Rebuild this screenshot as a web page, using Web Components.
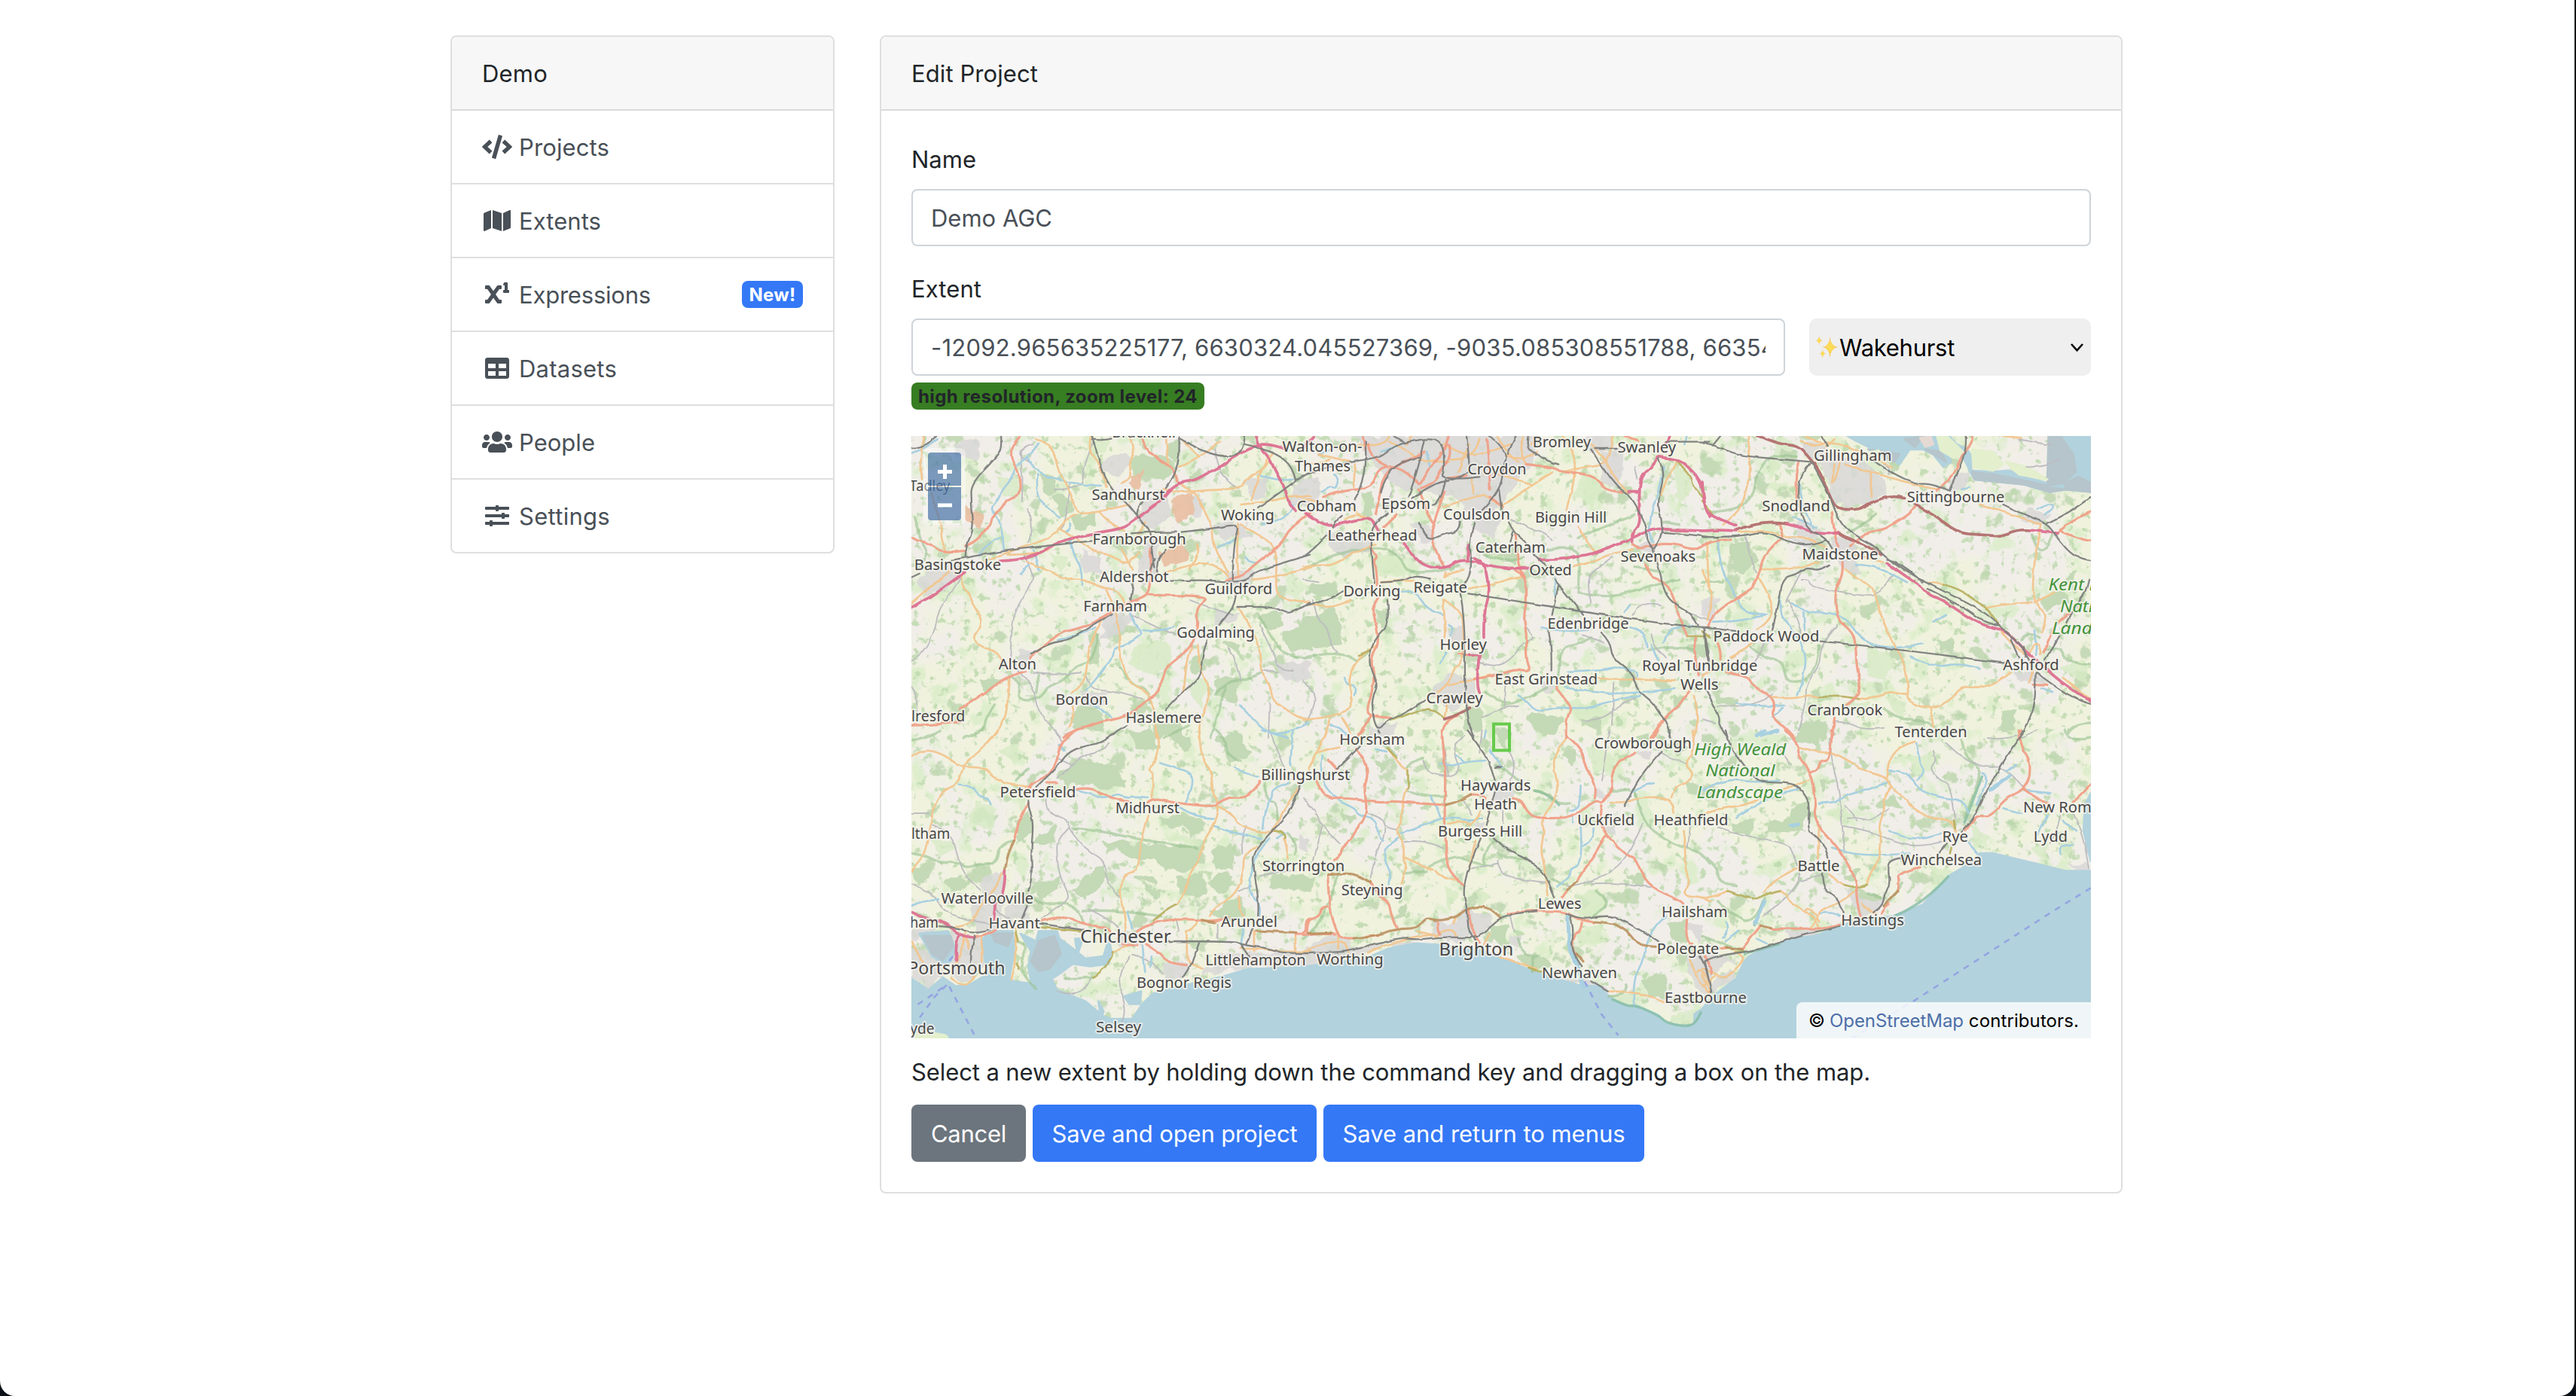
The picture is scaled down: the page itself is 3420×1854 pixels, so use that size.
<!DOCTYPE html>
<html lang="en">
<head>
<meta charset="utf-8">
<title>Edit Project</title>
<style>
html,body{margin:0;height:100%;background:#0b1116}
body{font:400 31px/48px Inter,"Liberation Sans",sans-serif;color:#212529;overflow:hidden}
</style>
</head>
<body>
<app-shell>
  <ui-card slot="nav">
    <fit-text slot="header" w="87">Demo</fit-text>
    <nav-item icon="code"><fit-text w="120">Projects</fit-text></nav-item>
    <nav-item icon="map"><fit-text w="109">Extents</fit-text></nav-item>
    <nav-item icon="sup"><fit-text w="175">Expressions</fit-text><ui-badge slot="end"><fit-text w="62">New!</fit-text></ui-badge></nav-item>
    <nav-item icon="table"><fit-text w="130">Datasets</fit-text></nav-item>
    <nav-item icon="users"><fit-text w="101">People</fit-text></nav-item>
    <nav-item icon="sliders"><fit-text w="121">Settings</fit-text></nav-item>
  </ui-card>
  <ui-card slot="main">
    <fit-text slot="header" w="168">Edit Project</fit-text>
    <project-form></project-form>
  </ui-card>
</app-shell>
<script>
const define = (name, html, ready) => customElements.define(name, class extends HTMLElement {
  constructor() {
    super();
    this.attachShadow({mode: 'open'}).innerHTML = html;
  }
  connectedCallback() { if (ready) ready(this, this.shadowRoot); }
});

define('app-shell', `<style>
:host{display:block;box-sizing:border-box;width:3418px;height:1854px;padding:47px 2px 0 0;background:#fff;border-radius:0 0 20px 20px}
.row{display:flex;align-items:flex-start;gap:60px;width:2220px;margin:0 auto}
.nav{width:510px}.main{width:1650px}
</style><div class="row"><div class="nav"><slot name="nav"></slot></div><div class="main"><slot name="main"></slot></div></div>`);

define('ui-card', `<style>
:host{display:block;border:2px solid #dfdfdf;border-radius:8px;background:#fff;overflow:hidden}
header{padding:24px 40px;height:48px;background:#f7f7f7;border-bottom:2px solid #dadada;border-radius:6px 6px 0 0}
</style><header><slot name="header"></slot></header><slot></slot>`);

const ICONS = {
code:[640,'M278.9 511.5l-61-17.7c-6.4-1.8-10-8.5-8.2-14.9L346.2 8.7c1.8-6.4 8.5-10 14.9-8.2l61 17.7c6.4 1.8 10 8.5 8.2 14.9L293.8 503.3c-1.9 6.4-8.5 10.1-14.9 8.2zm-114-112.2l43.5-46.4c4.6-4.9 4.3-12.7-.8-17.2L117 256l90.6-79.7c5.1-4.5 5.5-12.3.8-17.2l-43.5-46.4c-4.5-4.8-12.1-5.1-17-.5L3.8 247.2c-5.1 4.7-5.1 12.8 0 17.5l144.1 135.1c4.9 4.6 12.5 4.4 17-.5zm327.2.6l144.1-135.1c5.1-4.7 5.1-12.8 0-17.5L492.1 112.1c-4.8-4.5-12.4-4.3-17 .5L431.6 159c-4.6 4.9-4.3 12.7.8 17.2L523 256l-90.6 79.7c-5.1 4.5-5.5 12.3-.8 17.2l43.5 46.4c4.5 4.9 12.1 5.1 17 .6z'],
map:[576,'M0 117.66v346.32c0 11.32 11.43 19.06 21.94 14.86L160 416V32L20.12 87.95A32.006 32.006 0 0 0 0 117.66zM192 416l192 64V96L192 32v384zM554.06 33.16L416 96v384l139.88-55.95A31.996 31.996 0 0 0 576 394.34V48.02c0-11.32-11.43-19.06-21.94-14.86z'],
sup:[512,'M496 160h-16V16a16 16 0 0 0-16-16h-48a16 16 0 0 0-14.29 8.83l-16 32A16 16 0 0 0 400 64h16v96h-16a16 16 0 0 0-16 16v32a16 16 0 0 0 16 16h96a16 16 0 0 0 16-16v-32a16 16 0 0 0-16-16zM336 64h-67a16 16 0 0 0-13.14 6.87l-79.9 115-79.9-115A16 16 0 0 0 83 64H16A16 16 0 0 0 0 80v48a16 16 0 0 0 16 16h33.48l77.81 112-77.81 112H16a16 16 0 0 0-16 16v48a16 16 0 0 0 16 16h67a16 16 0 0 0 13.14-6.87l79.9-115 79.9 115A16 16 0 0 0 269 448h67a16 16 0 0 0 16-16v-48a16 16 0 0 0-16-16h-33.48l-77.81-112 77.81-112H336a16 16 0 0 0 16-16V80a16 16 0 0 0-16-16z'],
table:[512,'M464 32H48C21.49 32 0 53.49 0 80v352c0 26.51 21.49 48 48 48h416c26.51 0 48-21.49 48-48V80c0-26.51-21.49-48-48-48zM224 416H64v-96h160v96zm0-160H64v-96h160v96zm224 160H288v-96h160v96zm0-160H288v-96h160v96z'],
users:[640,'M96 224c35.3 0 64-28.7 64-64s-28.7-64-64-64-64 28.7-64 64 28.7 64 64 64zm448 0c35.3 0 64-28.7 64-64s-28.7-64-64-64-64 28.7-64 64 28.7 64 64 64zm32 32h-64c-17.6 0-33.5 7.1-45.1 18.6 40.3 22.1 68.9 62 75.1 109.4h66c17.7 0 32-14.3 32-32v-32c0-35.3-28.7-64-64-64zm-256 0c61.9 0 112-50.1 112-112S381.9 32 320 32 208 82.1 208 144s50.1 112 112 112zm76.8 32h-8.3c-20.8 10-43.9 16-68.5 16s-47.6-6-68.5-16h-8.3C179.6 288 128 339.6 128 403.2V432c0 26.5 21.5 48 48 48h288c26.5 0 48-21.5 48-48v-28.8c0-63.6-51.6-115.2-115.2-115.2zm-223.7-13.4C161.5 263.1 145.6 256 128 256H64c-35.3 0-64 28.7-64 64v32c0 17.7 14.3 32 32 32h65.9c6.3-47.4 34.9-87.3 75.2-109.4z'],
sliders:[512,'M496 384H160v-16c0-8.8-7.2-16-16-16h-32c-8.8 0-16 7.2-16 16v16H16c-8.8 0-16 7.2-16 16v32c0 8.8 7.2 16 16 16h80v16c0 8.8 7.2 16 16 16h32c8.8 0 16-7.2 16-16v-16h336c8.8 0 16-7.2 16-16v-32c0-8.8-7.2-16-16-16zm0-160h-80v-16c0-8.8-7.2-16-16-16h-32c-8.8 0-16 7.2-16 16v16H16c-8.8 0-16 7.2-16 16v32c0 8.8 7.2 16 16 16h336v16c0 8.8 7.2 16 16 16h32c8.8 0 16-7.2 16-16v-16h80c8.8 0 16-7.2 16-16v-32c0-8.8-7.2-16-16-16zm0-160H288V48c0-8.8-7.2-16-16-16h-32c-8.8 0-16 7.2-16 16v16H16C7.2 64 0 71.2 0 80v32c0 8.8 7.2 16 16 16h208v16c0 8.8 7.2 16 16 16h32c8.8 0 16-7.2 16-16v-16h208c8.8 0 16-7.2 16-16V80c0-8.8-7.2-16-16-16z']};

define('nav-item', `<style>
:host{display:flex;align-items:center;height:96px;padding:0 40px;color:#495057;border-bottom:2px solid #dfdfdf}
:host(:last-of-type){border-bottom:0}
.i{display:flex;justify-content:center;width:40px;margin-right:9px}
svg{display:block;height:32px;fill:currentColor}
.end{margin-left:auto}
</style><span class="i"></span><slot></slot><span class="end"><slot name="end"></slot></span>`, (el, root) => {
  const [w, d] = ICONS[el.getAttribute('icon')];
  root.querySelector('.i').innerHTML = `<svg viewBox="0 0 ${w} 512" width="${w / 16}"><path d="${d}"/></svg>`;
});

define('ui-badge', `<style>
:host{display:flex;align-items:center;justify-content:center;box-sizing:border-box;width:81px;height:36px;border-radius:8px;background:#3478f6;color:#fff;font-size:24px;font-weight:700;line-height:36px}
:host([kind=ok]){width:389px;background:#377d22;color:#212529}
</style><slot></slot>`);

define('ui-button', `<style>
:host{display:flex;align-items:center;justify-content:center;height:76px;border-radius:8px;background:#3478f6;color:#fff}
:host([kind=secondary]){background:#6c757d}
</style><slot></slot>`);

define('ui-field', `<style>
:host{display:flex;align-items:center;box-sizing:border-box;height:76px;border:2px solid #ced4da;border-radius:8px;padding:0 24px;color:#495057;background:#fff}
div{flex:1;overflow:hidden;white-space:nowrap;width:0}
</style><div><slot></slot></div>`);

define('ui-select', `<style>
:host{display:flex;align-items:center;box-sizing:border-box;height:76px;border-radius:10px;padding:0 10px 0 8px;color:#000;background:#efefef}
.c{margin-left:auto}svg{display:block}.s{margin-right:1px}
</style><svg class="s" width="31" height="30" viewBox="0 0 31 30"><defs><radialGradient id="g"><stop offset="0" stop-color="#ffe14d"/><stop offset=".6" stop-color="#f8d266"/><stop offset="1" stop-color="#eec08a"/></radialGradient></defs><g fill="url(#g)"><path d="M19.500 1Q20.500 13.500 30.500 15Q20.500 16.500 19.500 29Q18.500 16.500 9.500 15Q18.500 13.500 19.500 1Z"/><path d="M5.200 0Q5.700 5.500 9.800 6.200Q5.700 7 5.200 12.500Q4.700 7 .8 6.200Q4.700 5.500 5.200 0Z"/><path d="M9.800 17.500Q10.300 22.800 14.200 23.600Q10.300 24.400 9.800 30Q9.300 24.400 5.600 23.600Q9.300 22.800 9.800 17.500Z"/></g></svg><slot></slot><svg class="c" width="17" height="11" viewBox="0 0 17 11"><path d="M1 1l7.500 8.300L16 1" fill="none" stroke="#000" stroke-width="2.600"/></svg>`);

/* Map geometry: six survey sheets, each with its own origin. 
   One sheet unit is 1/2.9037 px across and 1/3 px down. */
const SHEETS = [
{o:[1200,570],
urban:'930,290 1010,250 1020,340 960,400 900,350;690,490 760,520 760,570 700,580;80,560 230,520 225,600 90,655 60,620;800,100 880,110 820,190 760,150;1490,240 1568,200 1568,310 1500,300;1240,580 1340,560 1330,630 1250,620;790,740 880,750 850,800 760,840;440,880 490,890 480,940 430,940;1320,200 1400,190 1390,270 1320,260;1200,380 1310,380 1340,430 1220,430;1090,270 1150,280 1140,340 1100,340;940,430 980,440 970,600 930,620 900,560;190,60 280,50 290,110 200,100;680,1040 780,1060 750,1110 680,1090;1210,720 1290,740 1270,770 1200,770;1430,940 1568,930 1568,990 1480,1000',
wood:'895,105 1010,115 1050,160 1010,205 940,180 890,170 880,120;530,190 580,190 585,250 540,250;570,265 620,265 655,330 600,335;660,345 730,340 730,390 660,395;1460,810 1568,780 1568,880 1490,880;660,1120 750,1130 760,1190 650,1180;295,1005 370,1000 320,1055;1030,50 1060,50 1050,120 1025,110;1370,740 1440,730 1460,780 1390,790;970,1180 1060,1160 1080,1230 960,1230;1200,1000 1290,990 1280,1080 1210,1060;720,820 750,820 745,930 715,930;1110,900 1150,890 1160,960 1120,970;1240,860 1280,850 1290,900',
grass:'360,200 440,200 440,260 380,260;900,870 1000,850 1040,900 960,980 870,930;560,500 630,510 610,570;700,30 790,60 740,110;1080,1000 1170,1000 1150,1100',
mil:'1035,280 1100,255 1115,330 1065,375 1040,340;990,490 1080,470 1095,520 1000,550;240,310 300,340 295,395 255,370;885,180 918,165 900,230 876,215',
green:'40,350 65,450 100,510 50,560;230,1230 310,1210 320,1140 350,1100;420,990 450,1010 440,1080 520,1080 560,1020 620,1000 650,950 740,920 745,820;830,950 880,1020 950,1040 950,1090;1370,740 1400,800 1430,850 1480,910 1568,910;1200,1060 1240,1000 1330,1000 1380,970;1180,1230 1210,1150 1240,1020;520,980 510,1050;80,30 70,60;1000,1230 1100,1180',
minor:'29,925 80,890 120,800 130,730 190,640 220,590;410,920 415,780 440,700 500,600 500,570 460,500;440,960 500,1020 510,1110 560,1170 600,1225;500,970 580,985 680,970;580,240 690,240 690,150 730,50;450,90 450,130 460,200 455,290;640,220 630,380 600,400;29,1025 55,1060 50,1130;700,980 720,1040 800,1040 920,1075;1250,870 1290,950 1300,1000;1405,1230 1410,1090;880,740 950,780 1050,820;500,60 450,80 440,110 480,130;1440,970 1380,960;1370,780 1430,900 1440,960 1500,960;1200,80 1210,190 1290,235;1100,680 1200,720 1270,740;480,320 500,400 480,450',
river:'520,60 500,90 470,110 430,150 415,200 380,240 360,290 330,320 380,370 385,480;380,430 340,440 290,500;470,110 520,180 600,200 640,220 760,225;515,180 510,260 540,300 600,350;640,375 648,400 620,410;640,430 650,490 690,560 685,620;480,540 450,580;500,480 520,560;870,730 900,790 920,820 850,860 810,870 800,920 770,950 740,1000 700,1040;920,800 960,810 1040,790;590,840 670,825 740,790;700,1080 760,1110 800,1150;1295,1100 1350,1160 1400,1210 1480,1215 1560,1170;29,95 80,80 130,40;1320,510 1340,540 1370,530;1380,380 1480,370 1500,300;1210,470 1280,440;1370,180 1440,210 1500,200',
orange:'29,695 90,640 150,590 200,550;220,580 225,630 250,650 260,690 300,750 295,795 265,825 285,860 340,880 370,900 375,925;405,985 400,1100 385,1170 340,1230;510,40 545,50 580,90 595,170 640,240 665,340 750,330 870,300;665,340 630,350 570,430 480,465 400,490 300,530;470,525 570,570 620,597 705,600 750,630 830,640 850,690;600,400 660,430 730,490 800,500 870,550 905,490;750,330 800,380 850,405;780,640 810,700 830,790 835,930 870,1010 930,1040 960,1080 975,1230;770,750 715,850 705,960 690,1020 650,1050;650,1100 660,1130 635,1185;1110,870 1085,930 1080,1050;1130,860 1140,970 1180,1020 1165,1120 1135,1170 1140,1230;1290,710 1350,810 1375,880 1378,970 1415,1030 1420,1080 1480,1120 1530,1155 1568,1155;870,30 890,80 865,150 880,200 840,215;1010,27 1020,150;1080,250 1130,245 1300,238 1330,190 1400,155 1420,100;1060,215 1130,255 1160,330 1190,390 1195,480 1250,570;1080,250 1000,240;1300,300 1400,290 1500,265 1568,270;1010,570 1100,540 1200,530 1250,585;1290,380 1280,480 1290,590;1300,380 1400,440 1440,480 1430,660 1480,680 1568,690;1130,460 1140,510 1100,555;720,27 710,90 760,140 780,230;75,27 60,120 70,200;105,250 125,320 150,400 140,430 165,490;1060,150 1150,110 1220,50;1080,50 1140,110;1340,280 1370,180 1400,120;1340,600 1440,590 1568,550;840,480 880,560;930,370 900,430;400,500 500,500 560,480',
salmon:'445,27 415,80 413,120 438,160 450,200 450,260 395,280 380,315 340,350 335,385 300,405 290,440 240,465;29,430 50,445 90,450 145,495 235,485;920,40 930,75 980,120 1045,160 1060,215;950,475 955,560 948,620 940,660 870,688 780,738 730,775 650,800 600,812 560,850 500,890 490,915;940,660 980,662 1180,663 1135,705 1128,740 1138,775 1110,870 1015,940 1010,970 990,1000 985,1050 930,1085 895,1120 840,1150 760,1165 700,1190 650,1198 615,1230;470,965 400,985 360,1015 300,1060 215,1115;29,1180 130,1178 220,1165;1568,330 1490,395 1470,430 1440,475 1380,515 1330,560 1300,590 1240,600',
rail:'375,27 378,80 345,125 260,215 260,290 270,400 240,460 237,510;185,522 350,490 500,470 725,445;725,27 750,120 790,230 860,295 910,360 950,410 955,480 965,550;725,40 760,47 800,38;1060,27 1065,90 1045,190 1010,235;1060,35 1120,70 1200,105 1280,110 1310,75 1315,27;1315,60 1370,75 1440,100 1500,150 1510,205;1568,170 1510,205 1440,260 1365,315;1070,410 1200,395 1295,375 1270,460 1268,600;880,415 960,408 1050,410;1030,605 1150,600 1240,608 1320,605 1350,570 1440,540 1568,500;1010,480 965,530 980,570;965,520 950,560;885,610 875,680;800,738 720,785 640,840 560,850 490,895;1280,660 1275,700 1240,750 1215,780;1285,708 1420,705 1470,732 1500,730 1568,690;1170,840 1150,900 1145,980 1100,1030 1040,1080 1010,1120;860,1180 820,1200 790,1230;29,75 60,75 120,40 125,27;29,590 60,575;920,290 895,320 900,350',
pink:'29,712 60,690 105,668 160,625 235,570;370,525 435,522 500,500 545,485 590,450 725,415 840,398 900,355 985,290 1020,245 1060,212 1120,205 1170,175 1230,145 1260,118 1320,85 1370,58 1430,65 1470,78;1358,27 1370,70 1410,115 1430,165 1470,235 1480,290 1510,325;1550,335 1568,345',
t:'Bracknell,805,1045,34;Tadley,25,175,246;Sandhurst,727,1003,281;Woking,1225,1425,362;Farnborough,730,1085,460;Basingstoke,43,372,562;Aldershot,758,1018,608;Guildford,1163,1418,656;Farnham,695,935,726;Godalming,1055,1350,830;Alton,368,508,958;Bordon,587,785,1098;Haslemere,858,1145,1170;lresford,32,233,1164'},
{o:[1730,570],
urban:'200,27 560,27 900,27 880,130 800,240 740,330 620,320 560,260 480,240 400,250 330,200 260,120;1150,90 1230,90 1215,240 1160,200;490,1060 560,980 660,1000 660,1080 560,1110;0,200 60,200 70,260 20,300 0,280;565,800 615,800 615,850 570,850;290,1180 355,1165 340,1225 300,1225;420,380 480,380 500,440 450,450;1100,30 1180,27 1190,70 1110,90;920,1010 970,1020 950,1050;90,420 260,440 250,480 130,490;680,340 760,360 740,430 660,400;1280,470 1350,460 1340,500',
wood:'0,760 120,720 150,850 60,870 0,850;620,1130 680,1110 690,1190 640,1200;870,1140 1000,1150 960,1210 890,1190;1060,1150 1150,1150 1140,1200;230,260 270,260 260,340 230,330;280,720 320,730 310,790;1480,870 1568,860 1540,920;400,800 430,790 420,830;30,620 130,620 120,660 20,660;780,470 820,480 815,540 780,520;1430,1060 1480,1080 1440,1110',
grass:'1080,180 1150,230 1110,300 1050,250;1000,1080 1200,1130 1150,1200 1050,1150;1440,130 1500,230 1440,320;700,1090 780,1150 720,1230;280,500 390,520 380,580 300,570',
green:'0,560 90,510 200,480 320,470 380,520 400,570 540,570 600,540;940,480 1060,460 1065,560 1060,650;1060,430 1140,400 1280,340;980,1020 990,870 1060,860 1110,830;0,910 100,890 190,905 210,930 260,880;780,1100 850,1080 940,1030;1060,650 1170,670 1290,640 1380,610 1450,600;1390,370 1450,380;700,500 790,540 850,510;1330,880 1440,860 1500,880;700,1050 740,1080 790,1090;1280,550 1390,570',
minor:'40,680 50,750 90,780 105,850 130,890;0,1000 45,1050 45,1110 10,1170;860,790 900,830 850,850 800,920 740,950 680,930;1110,690 1090,600 1140,550 1190,510;800,360 850,380 880,400 940,410 960,440;1160,850 1080,820;780,1100 770,1050 790,970;690,1150 750,1110 830,1100;1380,700 1300,680 1270,740;340,250 320,330;1340,820 1345,870 1400,910;1190,1180 1200,1010;1568,760 1480,730;0,600 60,610;1280,150 1290,200;1080,1160 1150,1160 1230,1090 1280,1070',
river:'70,250 100,220 130,240 135,200 120,180;380,650 410,640 450,670 480,720 540,740;560,780 580,780 570,820;530,930 550,890;1390,150 1370,250 1345,320 1330,430 1350,450;970,590 970,660;1020,965 1150,960 1210,945 1300,965 1290,990;1010,1030 1130,1050 1250,1055 1430,1035;830,1060 860,1080 900,1130 980,1105 1080,1120 1190,1080 1300,1060;920,790 1000,810 1100,800;1260,790 1320,800 1325,870;1390,850 1410,800 1440,790 1500,780;1340,860 1370,920;160,990 170,1020 210,1020 200,1060;110,80 60,100;300,90 380,60;480,90 490,160;1470,60 1480,27;105,1180 160,1190 170,1225;1240,730 1260,700',
orange:'0,550 60,540 110,545 180,500 250,465 280,460;0,685 50,705 130,710 180,680;300,610 400,600 430,605;640,635 740,615 820,590 850,590;540,680 550,800 545,830;545,680 610,720 620,800 615,940 575,950 565,1020 500,1060;560,1020 620,1010 720,980;285,860 215,900 175,1000 195,1080 150,1145 0,1158;150,1150 185,1210;105,1155 80,1230;1130,990 1200,1000 1240,995 1300,1000 1430,1000;540,310 640,275 700,260 740,290 770,310 880,220 960,170;880,220 800,190 750,180;650,200 660,260;560,120 660,130 680,40;1000,27 1050,100 1045,210 1030,260 1015,320;1090,150 1190,155 1195,27;780,100 850,130 900,90;330,50 400,80 450,130 560,130;540,60 630,110 720,90 800,60;750,27 770,80 830,130;1440,130 1400,200 1380,260;1060,390 1100,470 1130,490;1040,545 1110,530 1200,490 1270,480;160,360 210,330 240,350;180,310 230,350;0,280 70,290;550,570 540,600 560,570 620,560;1510,1060 1530,1180 1505,1230;200,140 195,230;330,27 310,80 200,60;60,100 180,130;640,60 600,170;850,27 830,90 860,140;1090,150 1000,170;1110,60 1160,110 1200,200 1250,250;880,60 910,27;1540,560 1568,640;560,1060 545,1150;0,130 50,150 100,120;420,27 400,60',
olive:'1445,130 1500,190 1500,225 1540,270;545,1155 520,1125 470,1115 420,1130 340,1160;260,880 215,900;1480,825 1568,825',
salmon:'75,270 150,245 265,235 290,150 370,150 440,210 450,225 490,150 540,100 560,30;470,90 370,140 310,180 290,290 280,340;560,60 570,100 530,170 500,220 455,235;710,40 720,130 720,240;860,140 960,150 1000,172 1080,175 1150,205 1160,245 1230,250;560,195 630,185;250,60 260,120 320,145;545,250 500,380 495,430 520,510 545,550;445,240 480,340 500,370;360,340 310,390;260,470 290,510 270,520 285,560 285,620;290,670 265,710 275,750 295,850 260,910 275,980 265,1050 245,1120 260,1145 340,1150;260,1145 215,1220;820,420 825,540 860,600 862,690 850,740 862,820 860,920 880,965 820,955 740,985 660,995;975,1030 1020,1090 1035,1110 1010,1170 1015,1230;1320,540 1340,590 1395,605 1430,670 1450,760 1480,820;1270,460 1290,480 1350,460 1430,455 1530,490 1568,450;1495,1040 1450,1100 1390,1150 1340,1230;1515,830 1500,870 1525,980;535,1230 535,1160 600,1140;230,27 240,80;1240,27 1290,45;600,895 640,900;820,560 850,590;720,270 770,310',
rail:'0,185 60,160 190,130 300,110 350,65 470,35 540,50 545,170 530,190 600,200 680,190;470,40 440,180 405,270;240,50 245,130 225,240 200,280;450,110 380,130 320,180 300,250;420,275 500,215 600,200 640,165;630,27 640,110 640,150;720,27 790,95 770,150 765,240 690,320;790,95 820,27;350,27 390,50;755,240 765,320;660,375 640,440 650,530 640,600 605,640;795,370 820,420 855,440 885,500 940,545;810,410 800,450;450,375 470,450 550,415 600,410 605,370;500,305 530,300 550,200;0,510 40,480 90,425;150,345 120,370 115,390;330,335 270,370 260,460 275,610;300,610 380,608 430,580 490,595;0,705 110,680 155,645;325,680 335,770 275,840 255,900 260,960 290,1020 265,1070 270,1150 290,1200 320,1165 370,1145 470,1080;640,655 960,708 1190,745 1480,787 1568,790;605,650 625,750 623,1160 660,1230;985,620 960,740;970,600 1040,690 1080,740;945,800 960,860 957,965;1150,810 1185,850 1190,910 1270,970 1290,1040 1350,1090 1365,1120 1410,1180 1415,1230;1110,80 1160,160 1220,240 1260,260 1325,380 1325,450 1350,475;1125,75 1210,75;1370,115 1395,180 1365,290 1385,370 1380,440 1350,480;1400,50 1568,50;1380,410 1480,418 1568,430;1350,480 1375,560 1390,640 1420,690 1500,735 1520,780;885,90 860,75 870,30;885,90 940,130 985,140;1545,790 1555,850 1568,920',
pink:'10,335 60,370 110,388 160,372 240,355 270,362 290,405;390,455 430,515 485,552 555,553 600,520 660,528 740,548 800,555 880,553;910,520 1000,520 1050,505 1110,500 1200,460 1270,437 1330,405 1380,395 1430,403 1568,405;640,460 635,520;660,515 700,535 715,600 718,660 695,740 697,830;680,900 665,1010 680,1050;640,898 680,900;1415,27 1400,60;1365,115 1345,150 1300,190 1295,290 1300,380 1270,410 1268,450;1365,110 1450,118 1500,165 1540,220 1548,320 1568,345;1255,248 1295,248;0,75 40,30',
burnt:'545,1155 600,1140 640,1110',
t:'Walton-on-,-77,225,90;Thames,-29,180,168;Cobham,-21,203,326;Epsom,305,488,318;Croydon,637,858,181;Bromley,888,1107,71;Swanley,1215,1435,94;Coulsdon,543,795,361;Biggin Hill,897,1168,373;Leatherhead,97,437,445;Caterham,667,932,493;Oxted,875,1033,583;Sevenoaks,1227,1510,529;Reigate,428,630,651;Dorking,158,373,667;Edenbridge,945,1253,795;Horley,530,705,878;Crawley,478,690,1093;East Grinstead,742,1133,1016;Royal Tunbridge,1310,1749,962;Wells,1458,1599,1037'},
{o:[2260,570],
urban:'440,90 620,130 700,190 710,250 650,290 560,300 510,290 480,200;960,190 1030,170 1010,250 950,240;500,440 570,440 610,580 540,560;1200,970 1290,970 1320,1010 1230,1000;400,60 480,60 460,120 400,110;0,690 60,680 40,740 0,740;370,370 450,400 430,430 370,420;1270,320 1330,340 1310,370 1250,360;340,430 440,440 420,470',
wood:'110,460 190,450 200,520 160,565 115,550;1310,680 1400,650 1405,690 1320,720;920,840 960,840 960,890 920,880;1160,1130 1210,1130 1210,1200 1160,1200;380,1180 460,1160 480,1230 370,1230;300,90 370,90 340,150;1400,600 1440,560 1430,640;780,1170 840,1150 860,1190;60,1060 130,1070 120,1100 70,1090;200,200 260,210 240,260',
grass:'20,860 80,900 60,1000;640,870 740,920 700,1000 640,980;1380,950 1470,920 1480,1020;700,1080 790,1090 770,1140;540,1080 640,1090 600,1140;290,40 360,60 260,180',
green:'40,330 140,320 200,260 210,170 270,90 360,110;560,415 640,370 670,340;180,860 230,910 310,920 320,1000 370,1010 440,970 450,860;700,1110 740,1150 860,1160 900,1190;1230,840 1250,800 1300,830;1270,420 1290,480 1330,480 1350,420;1320,880 1380,860 1400,930 1498,940;60,430 60,480;1410,1210 1430,1170 1498,1170;0,610 80,610',
minor:'165,430 190,530 210,570;380,600 410,600 420,630 650,670 680,650 740,580;330,680 370,750 390,850;520,780 460,850 450,950 400,1010 400,1090 370,1200;0,1155 50,1170;60,1105 200,1110 270,1060;510,1165 570,1170 620,1200 700,1190;240,850 230,890 180,960;1220,40 1370,70 1340,60;1250,150 1330,155 1370,120;700,140 730,150 720,180;380,570 320,690;1230,1230 1290,1200',
river:'60,450 70,560 130,660 150,720 220,740 250,735;375,210 385,330 430,390;590,540 640,540 720,570 790,610;300,660 300,740 330,770 380,850 410,940 365,1060;340,690 390,730 500,730 560,760 620,850 750,880 850,855;390,730 395,800;800,905 890,950 1000,930 1070,955;890,770 940,740;130,1090 240,1110 320,1100;40,770 180,765 250,735;350,350 440,390;1290,320 1350,290 1360,310 1320,340;1280,800 1290,900;1310,1030 1350,1050;1000,240 1030,230;270,1150 310,1110',
sea:'1335,27 1498,27 1498,250 1400,240 1340,250 1240,220 1050,200 1030,165 1120,170 1180,165 1240,190 1330,215 1390,180 1430,160 1425,110 1380,60;560,27 900,27 940,90 960,130 930,150 890,100 850,80 800,80 760,140 720,110 660,80 600,50;950,27 980,60 1020,80 1040,110 1035,170 1010,120 960,60',
mud:'1335,27 1380,27 1430,100 1440,170 1390,215 1330,225 1240,205 1120,180 1040,170 1050,200 1240,220 1340,250 1400,240 1330,232;1400,215 1450,190 1498,215 1498,250 1400,240;640,80 760,100 740,130;860,80 920,90 940,130;780,40 850,30 820,70',
sandbar:'840,35 880,30 890,60 860,70',
isle:'905,27 945,30 1010,95 970,115 920,85;1040,80 1120,90 1160,140 1120,165 1045,150;1170,130 1250,150 1330,200 1220,180;610,100 680,85 690,110',
orange:'180,27 175,90 190,150 160,280 140,330 80,380;380,50 440,70 490,50 600,80 730,150;510,40 480,70;510,140 500,210;530,130 520,200 500,210;650,170 650,270;550,140 700,185 850,230 910,240;1070,300 1200,340 1300,380;1305,380 1285,480 1270,660 1300,710 1335,755 1310,810;1270,690 1140,698 1100,712;1280,690 1360,650;140,410 260,400 310,430 400,425 480,470;20,450 20,620 45,660 20,760;230,555 330,570 450,530;215,590 270,680 270,760 210,800;550,560 600,600 660,625 680,720 740,870 770,900 795,1020 790,1090 880,1115 960,1080 1000,1020 1110,1035 1190,970;880,1115 890,1185;270,1070 370,1075 410,1055 450,1068;600,1075 690,1065 720,1045 790,1055;1275,960 1260,1010;1260,900 1270,860 1300,850 1305,900;1150,800 1180,850 1250,900;110,910 180,870 220,820;590,500 700,530;0,980 40,960;870,612 930,615;1160,27 1230,35;400,30 470,60;1390,990 1498,1080',
olive:'930,617 1000,640 1060,690 1100,712 1150,790;450,1068 540,1058 600,1075;0,285 40,340;0,805 30,830',
salmon:'500,330 510,430 525,470;570,465 600,440 640,410 700,400 740,375 800,340 825,305;905,245 970,190 1000,100 1050,50 1040,27;1370,415 1400,370 1498,330;1380,405 1470,445 1498,445;540,530 545,570 510,650 520,760 560,790 590,830 595,950 610,1000 600,1070 555,1100;310,430 240,490 215,590 190,635 140,670 90,700 40,740 20,790;60,850 72,880 70,920;300,375 310,430;370,130 360,200 365,300;90,970 170,980 190,1020 270,1070 280,1110 265,1140 330,1200 355,1230;510,1150 500,1230;0,470 30,440 110,440;1315,890 1340,840 1360,770 1420,730;1275,1015 1330,1018;1220,1230 1230,1200;440,150 460,190',
burnt:'215,27 300,60 370,65 410,110 455,170 500,290 525,318 605,322 650,290 735,262 780,275;820,300 900,345 985,415 1080,420 1150,428 1215,398 1265,402;130,402 190,380 290,370 330,378;520,413 570,445 625,455 690,500',
rail:'0,50 50,65 140,105 310,120 420,130;40,65 70,27;1015,27 1020,70 985,180 955,240;420,130 375,180 370,290 400,400 480,430 500,475;420,130 490,260 520,350 570,415 660,460 715,520 830,595 950,655 1100,735 1160,800 1240,870 1260,920;665,130 740,180 830,220 880,215 955,245;460,27 485,70;0,430 130,430 240,405 310,440 410,470 480,440;490,540 450,565 400,550 360,580 310,590 295,700 270,800;455,845 800,880 1165,932;0,790 140,805;10,800 10,870 25,930;1160,300 1240,340 1330,375 1365,430 1440,520 1498,525;1330,375 1400,345 1498,270;715,520 770,535 850,610;1320,920 1370,840 1430,720 1480,650 1490,600;1190,840 1220,910;870,635 1010,710 1090,775 1150,785;1290,970 1410,1070 1498,1095;1285,970 1285,1080 1265,1150 1225,1230;15,1040 70,1145 60,1180 100,1230;1240,870 1245,905',
pink:'0,210 8,320 40,345 130,385;0,405 60,400 130,405;330,378 400,400 450,420 520,413;715,535 790,590 850,630 880,665 920,675 1010,740 1090,785 1170,800 1240,880 1290,920 1350,980 1440,1050 1498,1085;1265,402 1370,415',
t:'Gillingham,433,727,125;Snodland,233,490,328;Sittingbourne,792,1162,291;Maidstone,388,675,519;Paddock Wood,45,448,846;Ashford,1162,1373,960;Cranbrook,408,692,1140;Tenterden,745,1018,1228',
g:'Kent D,1337,1535,642;Natio,1382,1542,729;Lands,1350,1532,815'},
{o:[1200,970],
urban:'310,590 380,560 370,780 280,810 270,720;29,790 110,800 100,830 29,820;190,800 290,830 310,920 240,1010 180,960;1010,930 1090,930 1080,970 1010,1000;1230,900 1320,880 1568,895 1568,935 1300,945 1150,970;820,820 900,810 910,855 840,860;29,870 100,900 160,960 95,1025 29,970;390,700 470,700 470,750 400,760;1520,430 1560,440 1540,480;340,970 420,990 340,985',
wood:'600,180 690,120 830,150 850,230 750,220 600,200;770,440 850,450 1100,470 1160,520 1080,560 960,520 860,500;710,580 770,540 770,610 690,670 660,640;500,620 600,590 590,630 520,670;1060,590 1150,580 1170,640 1080,660;1190,720 1290,660 1320,720 1250,765;530,410 580,380 580,440 510,450;29,560 100,540 100,590 60,610;440,370 480,330 500,400 440,440;880,0 950,0 965,70 900,80;1210,30 1290,10 1340,90 1250,120;1430,570 1568,590 1568,640 1420,620;1190,490 1260,450 1270,560 1200,540;160,600 230,600 240,625 190,635;1000,340 1160,370 1150,400 1020,380;930,620 990,640 980,670;900,590 950,580 960,610;1180,620 1220,570 1260,590 1230,650;1020,20 1100,30 1090,80',
grass:'280,280 350,310 340,400 260,360;370,80 440,70 430,130;100,420 200,460 150,500;430,270 470,260 450,310;1020,430 1140,430 1130,460',
green:'29,490 90,500 140,530 200,520 240,550 300,530 360,530 370,450 420,440;500,670 540,700 620,680 680,720 690,760;690,720 790,710 990,740;650,390 760,400 930,440 1130,470;430,840 480,850 450,920 460,980 510,1030;620,990 730,985;29,40 90,30 140,0;1200,0 1240,30 1240,100 1300,120;1480,410 1520,450 1510,490;430,200 480,150;1390,220 1400,280 1440,290 1440,350',
minor:'110,380 170,400 190,440 210,510 230,580 300,640;29,330 100,330;550,270 550,310 580,340 635,360 635,390 680,450 720,490 775,520 780,610 830,665;635,390 590,440 590,500 600,580 635,650 630,680 570,720 530,750;29,610 100,640 130,690 200,750 330,770;870,900 830,960 840,1060 855,1130 840,1160;590,1040 690,1070 720,990;1320,380 1300,430 1305,490;1410,0 1440,80 1470,150;1370,580 1440,560 1510,560;590,190 650,140 690,100 750,90 790,50;880,890 940,900 1000,970;710,710 790,750 830,790;1290,640 1340,620;350,700 370,740 440,770;1210,770 1210,830;1050,750 1060,800;580,0 610,50;590,110 650,140',
river:'210,215 260,220 290,260 330,275 335,295;665,240 730,255 770,275 830,250 850,270 900,265 940,270;985,130 1050,150 1110,170 1115,230 1085,290;1060,305 1130,350 1195,350;1195,380 1280,415 1380,430;1275,145 1310,175 1370,185;1480,210 1420,230 1420,270 1395,300 1385,390;1410,430 1370,470 1340,560 1330,640 1380,700 1370,740;1500,0 1490,140;29,700 60,680 130,675;860,720 880,790;920,860 930,960;1380,0 1480,30;600,60 620,80;1310,780 1300,850;955,900 950,940;1440,430 1470,410',
sea:'0,960 29,990 60,1010 95,1035 150,985 200,1020 260,1010 300,985 340,975 420,1000 500,1010 520,1035 590,1035 700,1080 770,1140 800,1150 880,1150 920,1090 960,1050 1060,1020 1160,1000 1250,975 1330,950 1568,945 1600,1240 0,1240;60,810 170,800 200,870 180,920 150,930 110,900;305,830 330,800 420,800 425,880 405,1000 330,990 310,900;450,810 510,840 520,800 590,800 600,830 640,860 700,910 770,900 790,830 800,880 790,930 720,940 650,930 600,970 570,990 590,1035 520,1035 490,1000 480,940 490,880;850,1060 915,1040 910,1090 870,1090;750,1080 770,1120 760,1145;660,830 690,830 670,890',
mud:'75,820 180,820 190,860 150,915 110,890;340,810 420,810 400,860 350,840;520,840 580,820 605,890 560,950 520,960 490,920',
isle:'29,1215 80,1200 160,1215 170,1227 29,1227',
orange:'29,105 60,85 100,78 160,100 215,145 315,148 340,185 380,200 385,215 490,225;360,0 300,80 240,120 220,180 200,220 145,240 110,320 90,480 50,530 29,560;975,0 985,60 965,130 945,160 965,170 955,270;940,340 915,420 905,560 850,575 830,640 850,710 855,800;1140,0 1150,120 1185,160 1190,250 1215,300 1205,360 1150,450 1145,510 1100,570 1090,640 1050,695;1215,305 1275,340 1280,370 1390,415 1430,400;1360,460 1310,495 1310,560 1285,650 1190,710 1180,740;1290,660 1295,720 1310,740;1465,430 1480,510;1420,400 1520,230;380,570 340,650 290,700 270,770 200,780;240,800 225,870 200,940;240,820 250,870;300,820 300,920;430,790 435,930 415,990;1090,800 1090,900 1100,930 1150,950;1130,760 1110,800 1090,800;1350,800 1350,880;1300,870 1420,870 1450,885 1568,880;29,840 70,920;180,985 220,1020 265,1000 270,980;860,860 810,880;1510,810 1510,880',
olive:'1050,695 1000,720 960,760;805,880 800,930 730,985;530,785 690,800;1430,400 1475,405 1470,430;430,800 440,840;435,930 445,950',
brown:'425,440 400,480 390,560;1358,798 1510,805;1150,755 1200,765',
salmon:'660,0 600,55 590,130 550,185 490,210 485,230;550,210 590,210;665,235 720,225 790,270 870,285;940,290 960,270 1050,290 1200,305 1215,285 1260,265 1310,270 1350,240 1375,205;480,290 435,370 425,440;530,760 560,748 640,745 680,770 790,785 795,800;900,800 960,760 1100,750 1200,765 1250,745;935,855 980,880 1020,930 1090,935;840,855 900,855;270,825 320,820 355,795;1510,810 1550,815 1550,750 1568,750',
pink:'390,560 390,620 378,655;355,690 350,750;29,725 80,750 170,765 210,820 270,825;210,820 195,870 205,915',
rail:'825,0 780,45 690,62 630,90 590,150 510,225;480,280 480,310 500,360 490,480 495,600 480,640;475,700 455,750;130,780 200,782 275,815 330,795;275,820 260,860 258,925;525,770 690,795;1020,840 1270,840 1310,855 1420,870 1450,888 1568,888;1140,840 1120,900 1105,940 1075,985;1300,855 1330,900;1345,790 1320,850;1530,220 1490,320 1450,370 1410,410 1345,490 1350,560 1370,690 1365,740',
ferry:'175,1020 230,1130 280,1230;165,1015 120,1060 50,1160;150,1025 35,1105;190,900 165,930',
t:'ltham,32,175,432;Petersfield,373,660,266;Midhurst,818,1060,331;Billingshurst,1380,1717,197;Storrington,1385,1696,560;Waterlooville,147,497,691;Havant,330,522,788;ham,27,130,786;Arundel,1225,1437,782;Littlehampton,1165,1547,936;Bognor Regis,900,1260,1026;Selsey,743,912,1202;yde,27,115,1208',
b:'Chichester,683,1027,847;Portsmouth,18,388,971'},
{o:[1730,970],
urban:'580,760 630,720 720,740 740,780 700,800 620,830 550,830;0,900 80,820 180,820 200,870 300,850 250,890 50,935 0,935;750,210 800,220 790,280 740,280;1290,90 1350,85 1340,115 1300,120;1480,900 1568,910 1568,1060 1510,1020;960,980 1100,1000 1180,1040 1080,1015;805,810 840,820 830,860 810,850;500,770 560,770 560,820 500,820;1130,240 1150,240 1150,280;1480,770 1540,790 1520,840;350,840 430,850 440,855 350,860;255,0 320,0 310,15 260,15;1140,370 1200,380 1190,410;660,370 700,370 690,420',
wood:'1310,1000 1390,970 1400,1060 1340,1060;830,910 900,900 960,940 930,960;1410,780 1470,750 1480,840 1420,830;720,790 790,780 760,850;150,340 200,340 180,370;740,0 790,0 785,60;1250,580 1320,570 1310,610;1000,90 1050,80 1040,130;1290,20 1330,20 1320,60;280,130 320,140 300,170;750,840 800,840 780,880;1430,40 1480,60 1440,90;580,10 620,0 620,30;350,740 390,700 400,740;1480,210 1530,220 1500,260',
grass:'1060,650 1130,640 1170,680 1120,740 1070,720;1420,1140 1500,1110 1530,1125 1510,1170 1430,1165;1190,1060 1280,1050 1270,1095 1230,1095;1060,800 1150,790 1140,840 1070,860;1100,70 1200,110 1180,170 1110,150;550,620 600,640 560,720;380,640 430,650 400,690;660,640 720,660 680,690',
green:'400,240 470,265 550,260;400,150 410,130 460,110;480,545 590,490 650,530 730,540;750,490 800,520 860,510;390,570 480,560;1280,250 1310,370 1400,440 1480,470 1540,490 1568,530;890,240 940,245 990,300 1030,290;740,140 790,160 830,200;330,70 360,100;1130,640 1170,670 1170,700 1120,740;140,560 80,780 0,830;1180,1060 1240,1060 1245,1010;700,540 690,480 740,440;830,830 840,900 900,900;960,590 1000,620 1020,610;1190,240 1260,240;890,900 880,960',
coast:'1190,1070 1250,1100 1280,1095 1370,1135 1400,1165 1470,1180 1515,1170 1535,1120;890,240 940,245 990,300',
minor:'0,270 40,310 80,390 140,450;75,380 40,520;250,330 310,350 315,390 360,395;315,390 310,440 280,480 260,590;390,445 460,430 540,470;460,120 470,160 520,180 600,185 600,140;600,140 560,60 620,20;690,0 680,90;750,520 760,580 880,600 940,605;1310,370 1260,480 1210,550 1100,610 1020,620;1110,610 1230,605 1340,625;800,730 815,800;1180,0 1160,130 1150,200;790,80 830,130 800,200;1380,90 1440,120 1480,130;620,280 650,340;770,320 770,370;650,550 750,530;1480,470 1490,380;540,50 560,180',
river:'75,100 60,190 130,280 200,310 210,335 280,350 290,430 310,440;370,430 320,460 310,510 345,580 330,610;380,410 460,380 530,350 600,345 640,365 690,350;530,350 510,290 490,260;530,130 570,145 620,125 700,120;590,100 620,125;720,80 770,150;705,0 700,30;1070,380 1075,460 1065,540 1030,550 1030,590 980,620;1120,390 1120,440 1080,460;1070,220 1070,330 1030,320;1270,245 1300,220 1355,210;1400,740 1370,760 1330,830 1310,920 1270,1000 1275,1090;280,75 320,85;1040,370 1040,340;1568,250 1540,230',
wide:'1020,740 1025,800 1025,880 1060,930 1080,1020',
sea:'-30,945 100,930 250,905 330,870 400,855 440,850 530,855 700,880 760,905 850,945 960,985 1060,1015 1140,1020 1190,1070 1250,1100 1280,1095 1370,1135 1400,1165 1470,1180 1515,1170 1535,1120 1590,1075 1590,1240 -30,1240',
orange:'90,0 60,80 20,155;50,90 100,72 140,65;330,75 360,130 405,160;400,230 375,330 380,360 360,400 385,440 390,520 400,540 380,610;390,505 440,530 500,555;510,560 540,595 590,595;665,440 640,550;560,370 600,355 640,370;685,320 665,370 635,375;1015,30 970,100 965,150 985,220 965,290 920,350 930,410 915,470 935,560 945,660;1185,285 1240,290 1300,265 1400,268 1430,300 1430,330;1420,270 1430,225 1490,200 1505,165 1470,135 1510,80 1505,0;1465,400 1475,480 1470,540 1490,600 1460,660 1540,665 1568,680;0,880 80,850 135,840 165,845 175,890;135,800 135,870;250,885 300,860 380,840 450,815 520,815;530,805 580,780 590,820;690,870 720,810;440,800 520,820;760,905 900,950;1180,1040 1290,1035 1390,1080;1490,910 1520,1000 1568,1050;1520,960 1540,940 1568,1010;580,770 590,740;1230,1230 1250,1230',
salmon:'205,75 240,115 250,180 235,230 245,290 240,350 200,400 185,435 150,465 145,500 120,520;50,200 65,240 105,275 160,268 300,290 330,280 500,295 550,297;535,0 550,170 545,290 550,480 560,570 620,615;650,255 700,255 705,275;810,270 840,275 870,345 975,352 1050,340 1130,275 1150,295 1190,240 1190,190 1215,120 1245,115 1280,90;1015,20 1075,70 1085,150 1135,215 1125,270;1350,30 1365,0;1150,300 1140,350 1170,420 1250,500 1280,505 1300,560 1340,625 1460,680 1465,690;1165,420 1130,490 1080,560 1055,600;1020,635 1000,665;95,580 100,700 130,810 160,830 195,828;260,605 290,660 330,680 340,740 360,785;520,765 525,810;0,815 60,805 125,810;15,810 15,755 60,745 75,705 95,705;640,710 640,790 680,845;790,730 850,720 900,720 1010,720 1060,755 1120,765;1075,765 1070,800 1045,810 1035,880 1055,895;1480,750 1470,845 1500,850;1550,900 1568,930;235,0 215,20;240,820 290,815;130,155 100,120',
brown:'550,297 600,285 650,255;1055,600 1020,635;195,828 290,815 360,790 440,790 470,745 520,760 590,745 635,710 690,700 730,715 760,745;95,575 130,572 210,570 260,605;1120,762 1190,765 1250,800 1270,830 1310,860 1360,862;20,808 110,805;1055,890 1080,920',
olive:'325,70 360,110;405,160 405,230;870,945 920,965',
rail:'220,60 180,110 130,155;635,0 690,80 725,140 740,200;740,245 720,310 705,380;685,430 640,540 615,640 635,720 635,810 665,835;735,430 780,475 880,520 945,590 960,650 970,665;0,888 130,885 200,875 380,825 440,835 530,822 660,828 700,810 740,760 800,728 900,720;1015,730 1070,755 1160,738 1210,745 1300,795 1370,840;1030,740 1045,790 1030,880 1075,940;1110,1000 1175,1040;1380,85 1340,130 1290,200 1260,260 1240,305;1530,900 1550,930 1568,1010;740,150 770,145;1415,0 1412,25;290,0 295,10',
ferry:'1085,1000 1150,1130 1215,1215',
t:'Horsham,143,390,56;Crowborough,1125,1495,71;Haywards,610,875,240;Heath,662,822,316;Uckfield,1060,1275,377;Heathfield,1355,1636,377;Burgess Hill,523,843,424;Steyning,150,382,656;Lewes,908,1070,711;Hailsham,1385,1634,744;Worthing,55,307,932;Newhaven,923,1208,987;Polegate,1367,1601,890;Eastbourne,1397,1707,1086',
b:'Brighton,527,808,898'},
{o:[2260,970],
urban:'570,640 690,680 680,720 600,740;330,800 430,790 430,820 340,825;30,900 120,920 20,960;1410,545 1490,540 1480,560;60,980 120,950 120,1000 30,1050',
wood:'370,0 440,0 440,60 380,50;370,290 410,290 390,400 250,410 260,360 330,350;120,370 200,370 190,420 120,400;540,590 600,560 590,600;600,110 640,130 620,160;60,150 120,110 110,170;680,300 720,260 770,300;600,640 680,660 670,680;450,200 480,200 470,240;0,20 60,40 30,90',
grass:'480,330 560,310 560,370;880,550 950,560 940,600 890,610;800,100 900,90 900,150 820,170;1040,370 1110,430 1050,480;1270,480 1330,450 1330,520;1370,440 1430,450 1400,510',
green:'0,500 60,540 60,610 130,620;1000,40 1010,100 1080,160 1050,240 1010,350;240,670 200,780 100,720 60,680;0,820 80,850 160,880;380,590 350,640;640,650 690,670;1400,0 1410,50 1498,30;700,700 730,680 770,610',
coast:'740,740 850,695 950,580;1080,180 1010,370;160,890 300,850;235,680 200,780',
minor:'490,30 500,130 530,250 540,400 550,480;540,380 650,400 750,450 850,465 940,440;560,350 610,345 640,370 720,310;890,80 905,120 875,150 920,205 960,215 975,350;940,50 1000,110 1090,150 1170,140 1240,230;60,385 140,415 330,450 350,490 370,550 380,600 300,690 240,740;380,600 460,575;1380,340 1370,400 1340,450;1430,330 1470,410 1490,550;290,60 340,140;1100,30 1150,40 1220,20;550,300 600,360',
river:'0,240 100,190 200,210 300,200;130,350 200,300 320,240 370,235;450,290 510,290 560,255 650,235 720,205;720,160 780,160 820,210 840,240 920,270 1010,275 1025,330;825,50 840,140 860,155 830,200;720,400 780,430 860,430 920,410;500,470 560,490 680,500 800,490;1080,170 1100,180 1080,250 1060,300;210,830 250,850;90,840 140,800;90,760 105,790 80,830;1330,340 1290,420;1390,360 1440,400;1160,310 1230,330;1250,240 1340,250;450,730 500,720 530,740;1170,160 1210,140;1380,490 1370,450 1430,460;1020,440 1060,490',
wide:'240,680 205,770;1110,240 1185,180;240,0 210,20;230,20 290,0;340,380 370,375',
sea:'-30,1130 0,1110 40,1060 130,990 160,925 180,900 250,865 350,830 430,820 500,795 560,770 600,755 740,740 850,695 950,580 1000,550 1060,510 1070,490 1120,490 1300,535 1400,560 1498,560 1498,1240 -30,1240;1498,250 1475,300 1470,400 1498,520',
orange:'370,65 430,85 510,90 580,130 620,160 710,185 725,230 780,265 810,310 890,355 970,360 975,400;710,185 715,130 760,60 820,45;725,230 695,270 705,310 680,380 690,420 685,510 640,580 635,615;0,335 90,305 170,300 240,265;310,235 410,200;450,385 445,510;360,550 280,590 235,645;0,670 60,660 100,640;300,638 330,660 330,680 390,720 430,740 450,790;490,575 545,615;595,635 530,690 460,710 440,750 415,790;400,715 430,710 450,760;615,690 640,720 670,730;0,950 50,970 80,990 120,960 170,905 130,880;0,970 30,1040;0,1020 50,980',
olive:'100,640 200,680 240,650 300,638;545,615 600,632 635,615;955,490 960,465;970,360 975,390;130,885 160,880',
brown:'225,778 265,788;95,865 155,872;735,660 755,640;700,700 735,660',
salmon:'320,0 370,50 370,100 420,165 440,290 430,330 450,385 490,430 550,510 600,610 590,660 610,740;500,0 495,120 455,122 450,150 420,168;265,790 430,790 490,788 530,775;155,870 225,778;690,730 720,690;755,640 760,600 750,570 840,545;1220,0 1230,70 1260,110 1265,180 1240,235 1180,265 1145,300 1145,310 1095,350 1075,335 1040,360 1015,400;1240,235 1300,280 1340,295;1430,285 1450,270 1498,215;70,870 100,865;10,900 40,945 35,970',
rail:'90,0 105,60 140,110 200,190 240,208 345,208 385,240 415,290 405,400 445,425 480,480 487,510;462,570 465,630 500,650 525,680 530,700 545,725;530,780 480,795 400,808 300,845 200,878 40,900 10,920;10,920 35,1040;660,725 695,700 700,660 725,610 715,550 730,515 780,510;940,450 910,490;1245,0 1190,75 1100,230 1040,370 1000,405',
ferry:'1498,628 1360,715 1090,895 820,1075 580,1225',
t:'Battle,370,527,561;Hastings,538,775,778;Rye,928,1022,445;Winchelsea,768,1075,537;Lydd,1280,1405,445;New Rom,1240,1498,328',
g:'High Weald,-29,320,98;National,15,277,183;Landscape,-19,308,271'}
];
const AREAS = [['urban','#dad9d8',.85],['grass','#d9ecc6',.8],['wood','#c4d9b6',1],['mil','#e9bfa2',.9]];
const WATER = [['sea','#b2d2dd',1],['mud','#b6c5cb',1],['isle','#e3efcd',1],['sandbar','#e5d9d3',1]];
const LINES = [['green','#98c290',3.4,.6],['minor','#bcbcbf',1.9,.95],['river','#a8d0e0',2.6,1],['wide','#a8d0e0',5,1],['orange','#f2c68f',2.7,.95],['olive','#b7ae5c',2.7,.9],['salmon','#f0a088',3.2,.95],['brown','#bb9160',3.2,.9],['burnt','#b26f6e',3.7,.95],['pink','#dd7090',3.7,.95],['rail','#7c7e7c',2.3,.95]];

const px = (o, x, y) => [(o[0] + x / 2.9037).toFixed(1), (o[1] + y / 3).toFixed(1)];
const trace = (key, close, curved) => SHEETS.map(s => (s[key] || '').split(';').filter(Boolean).map(line => {
  const p = line.trim().split(' ').map(c => px(s.o, ...c.split(',').map(Number)));
  if (!curved || p.length < 3) return 'M' + p.map(q => q.join(' ')).join('L') + (close ? 'Z' : '');
  let d = 'M' + p[0].join(' ');
  for (let i = 1; i < p.length - 1; i++) {
    const e = i === p.length - 2 ? p[i + 1] : [(+p[i][0] * .55 + p[i + 1][0] * .45).toFixed(1), (+p[i][1] * .55 + p[i + 1][1] * .45).toFixed(1)];
    d += 'Q' + p[i].join(' ') + ' ' + e.join(' ');
  }
  return d;
}).join('')).join('');
const labels = (key, attrs) => SHEETS.map(s => (s[key] || '').split(';').filter(Boolean).map(l => {
  const [t, a, b, y] = l.split(','), [x0, yy] = px(s.o, +a, +y), [x1] = px(s.o, +b, +y);
  return `<text x="${+x0 - 1}" y="${yy}" textLength="${(x1 - x0 + 2).toFixed(1)}" lengthAdjust="spacingAndGlyphs" ${attrs}>${t}</text>`;
}).join('')).join('');

const noise = (id, f, seed, oct, rgb, k, b, max = 1) => `<filter id="${id}" x="0" y="0" width="100%" height="100%" color-interpolation-filters="sRGB"><feTurbulence type="fractalNoise" baseFrequency="${f}" numOctaves="${oct}" seed="${seed}"/><feColorMatrix values="0 0 0 0 ${rgb[0]/255} 0 0 0 0 ${rgb[1]/255} 0 0 0 0 ${rgb[2]/255} 0 0 0 ${k} ${b}"/><feComponentTransfer><feFuncA type="linear" slope="${max}"/></feComponentTransfer></filter>`;

define('extent-map', `<style>
:host{display:block;position:relative;width:1566px;height:800px;overflow:hidden;background:#f1eee8}
svg.m{display:block}
.zoom{position:absolute;left:16px;top:16px;width:44px;padding:6px;display:flex;flex-direction:column;gap:2px;background:rgba(255,255,255,.4);border-radius:8px}
.zoom svg{display:block;background:rgba(0,60,136,.5);border-radius:4px 4px 0 0}
.zoom svg+svg{border-radius:0 0 4px 4px}
.attr{position:absolute;right:0;bottom:0;width:391px;height:48px;box-sizing:border-box;padding-left:16px;background:rgba(255,255,255,.8);border-radius:8px 0 0 0;color:#000;font-size:24px;line-height:48px;white-space:pre;display:flex}
a{color:#4d6fa8}
</style><svg class="m" width="1566" height="800" viewBox="1210 579 1566 800"></svg>
<div class="zoom"><svg width="44" height="44"><path d="M22.500 16v19M13 25.500h19" stroke="#fff" stroke-width="5"/></svg><svg width="44" height="44"><path d="M13 24h19" stroke="#fff" stroke-width="5"/></svg></div>
<div class="attr"><fit-text w="28">© </fit-text><a><fit-text w="178">OpenStreetMap</fit-text></a><fit-text w="153"> contributors.</fit-text></div>`, (el, root) => {
  const box = 'x="1210" y="579" width="1566" height="800"';
  const areas = a => a.map(([k, c, o]) => `<path d="${trace(k, true)}" fill="${c}" opacity="${o}" stroke="${c}" stroke-width="3" stroke-linejoin="round"/>`).join('');
  root.querySelector('.m').innerHTML = `<defs>
    ${noise('farm', .008, 4, 4, [240,242,222], 8, -3.5)}
    ${noise('meadow', .03, 11, 4, [217,237,199], 8, -4.700, .8)}
    ${noise('copse', .09, 23, 4, [186,215,170], 8, -4.900, .8)}
    ${noise('forest', .028, 37, 5, [196,217,182], 14, -9.500, .95)}
    <filter id="rough" x="0" y="0" width="100%" height="100%"><feTurbulence type="fractalNoise" baseFrequency=".05" numOctaves="3" seed="5"/><feDisplacementMap in="SourceGraphic" scale="16" xChannelSelector="R" yChannelSelector="A"/></filter>
    <filter id="wobble" filterUnits="userSpaceOnUse" ${box}><feTurbulence type="fractalNoise" baseFrequency=".06" numOctaves="2" seed="8"/><feDisplacementMap in="SourceGraphic" scale="4" xChannelSelector="R" yChannelSelector="A"/></filter></defs>
    <rect ${box} fill="#f1eee9"/><rect ${box} filter="url(#farm)"/><rect ${box} filter="url(#meadow)"/><rect ${box} filter="url(#forest)"/><rect ${box} filter="url(#copse)"/>
    <g filter="url(#rough)">${areas(AREAS)}</g>
    ${areas(WATER)}
    <path d="${trace('coast', false, true)}" fill="none" stroke="#84bda5" stroke-width="3.500" opacity=".8"/>
    <g fill="none" stroke-linejoin="round" stroke-linecap="round" filter="url(#wobble)">${LINES.map(([k, c, w, o]) => `<path d="${trace(k, false, true)}" stroke="${c}" stroke-width="${w}" opacity="${o}"/>`).join('')}</g>
    <path d="${trace('ferry', false)}" fill="none" stroke="#94a5e2" stroke-width="2.600" stroke-dasharray="8 8"/>
    <g font-family="'Noto Sans','Open Sans',sans-serif" fill="#474747" stroke="#f6f4ee" stroke-opacity=".75" stroke-width="4" stroke-linejoin="round" paint-order="stroke">
    ${labels('t', 'font-size="20"')}${labels('b', 'font-size="23"')}${labels('g', 'font-size="22" font-style="italic" style="fill:#43933c"')}</g>
    <rect x="1983" y="961.500" width="21" height="35" fill="none" stroke="#66cb4c" stroke-width="4"/>`;
});

define('project-form', `<style>
:host{display:flex;flex-direction:column;padding:40px}
label{display:block;height:48px;margin-bottom:16px}
.row{display:flex;gap:32px}
.name{margin-bottom:32px}
.ext{width:1160px}.sel{width:374px}
.badge{margin:9px 0 35px}
p{margin:20px 0;height:48px}
.btns{display:flex;gap:9px}
</style>
<label><fit-text w="86">Name</fit-text></label>
<ui-field class="name"><fit-text w="161">Demo AGC</fit-text></ui-field>
<label><fit-text w="93">Extent</fit-text></label>
<div class="row"><ui-field class="ext"><fit-text w="1122">-12092.965635225177, 6630324.045527369, -9035.085308551788, 66354</fit-text></ui-field><ui-select class="sel"><fit-text w="153">Wakehurst</fit-text></ui-select></div>
<ui-badge kind="ok" class="badge"><fit-text w="371">high resolution, zoom level: 24</fit-text></ui-badge>
<extent-map></extent-map>
<p><fit-text w="1273">Select a new extent by holding down the command key and dragging a box on the map.</fit-text></p>
<div class="btns"><ui-button kind="secondary" style="width:152px"><fit-text w="100">Cancel</fit-text></ui-button><ui-button style="width:377px"><fit-text w="326">Save and open project</fit-text></ui-button><ui-button style="width:426px"><fit-text w="375">Save and return to menus</fit-text></ui-button></div>`);

/* Inline text whose tracking is adjusted to a given advance width.
   Registered last, so that it measures in its host's final font. */
define('fit-text', `<style>:host{display:inline-block;white-space:pre;vertical-align:top;transform:translateY(1px)}</style><span><slot></slot></span>`, (el, root) => {
  const want = +el.getAttribute('w'), n = [...el.textContent].length, span = root.querySelector('span');
  const have = span.getBoundingClientRect().width;
  if (want && have) span.style.letterSpacing = ((want - have) / n).toFixed(3) + 'px';
});
</script>
</body>
</html>
